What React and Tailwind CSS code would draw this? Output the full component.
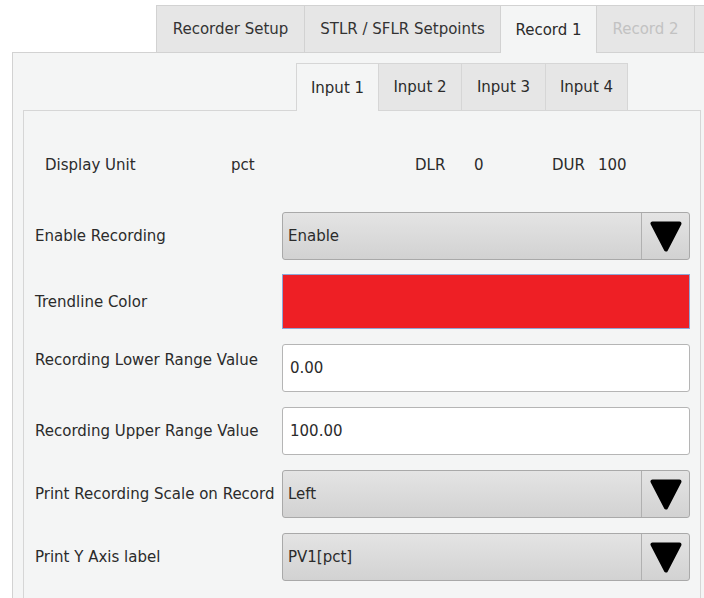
import React from "react";

function Arrow() {
  return (
    <svg width="32" height="31" viewBox="0 0 32 31">
      <path
        d="M2.5 2.5 H29.5 L16 28.5 Z"
        fill="#000"
        stroke="#000"
        strokeWidth="4"
        strokeLinejoin="round"
      />
    </svg>
  );
}

function Dropdown({ value }) {
  return (
    <div className="flex h-[48px] w-[408px] rounded-[3px] border border-[#a9a9a9] bg-gradient-to-b from-[#e4e4e4] to-[#d2d2d2]">
      <div className="flex flex-1 items-center pl-[5px] text-[#2b2b2b]">{value}</div>
      <div className="flex w-[48px] items-center justify-center border-l border-[#b0b0b0]">
        <Arrow />
      </div>
    </div>
  );
}

function TextBox({ value }) {
  return (
    <div className="flex h-[48px] w-[408px] items-center rounded-[3px] border border-[#b5b5b5] bg-white pl-[7px] text-[#2b2b2b]">
      {value}
    </div>
  );
}

function Row({ label, children, labelClass = "", className = "" }) {
  return (
    <div className={"flex items-center " + className}>
      <div className={"w-[258px] shrink-0 whitespace-nowrap pl-[11px] text-[#2b2b2b] " + labelClass}>{label}</div>
      {children}
    </div>
  );
}

export default function App() {
  const outerTabs = [
    { label: "Recorder Setup", w: "w-[148px]", state: "idle" },
    { label: "STLR / SFLR Setpoints", w: "w-[196px]", state: "idle" },
    { label: "Record 1", w: "w-[96px]", state: "active" },
    { label: "Record 2", w: "w-[98px]", state: "disabled" },
  ];
  const innerTabs = [
    { label: "Input 1", w: "w-[82px]", active: true },
    { label: "Input 2", w: "w-[83px]" },
    { label: "Input 3", w: "w-[84px]" },
    { label: "Input 4", w: "w-[83px]" },
  ];

  return (
    <div className="h-[598px] w-[704px] overflow-hidden bg-white font-['DejaVu_Sans',sans-serif] text-[15px] leading-[20px]">
      {/* top level tabs */}
      <div className="flex h-[52px] items-start pl-[156px] pt-[5px]">
        {outerTabs.map((t) => (
          <div
            key={t.label}
            className={
              "relative z-10 flex shrink-0 items-center justify-center whitespace-nowrap border-l border-t border-[#d2d2d2] " +
              t.w +
              (t.state === "active"
                ? " h-[48px] bg-[#f4f5f5] text-[#2b2b2b]"
                : t.state === "disabled"
                ? " h-[47px] bg-[#e6e6e6] text-[#c2c2c2]"
                : " h-[47px] bg-[#e6e6e6] text-[#333333]")
            }
          >
            {t.label}
          </div>
        ))}
        <div className="h-[47px] w-[20px] shrink-0 border-l border-t border-[#d2d2d2] bg-[#e6e6e6]" />
      </div>

      {/* record panel */}
      <div className="ml-[12px] h-[546px] border-l border-t border-[#d2d2d2] bg-[#f4f5f5] pt-[10px]">
        {/* input tabs */}
        <div className="flex h-[47px] items-start pl-[283px]">
          {innerTabs.map((t, i) => (
            <div
              key={t.label}
              className={
                "relative z-10 flex shrink-0 items-center justify-center border-l border-t border-[#d6d6d6] text-[#2b2b2b] " +
                t.w +
                (i === innerTabs.length - 1 ? " border-r" : "") +
                (t.active ? " h-[48px] bg-[#f4f5f5]" : " h-[47px] bg-[#e6e6e6]")
              }
            >
              {t.label}
            </div>
          ))}
        </div>

        {/* input panel */}
        <div className="ml-[10px] h-[500px] w-[678px] border-l border-r border-t border-[#d6d6d6] bg-[#f4f5f5] pt-[44px]">
          <div className="flex h-[20px] items-center pl-[21px] text-[#2b2b2b]">
            <div className="w-[186px]">Display Unit</div>
            <div className="w-[184px]">pct</div>
            <div className="w-[59px]">DLR</div>
            <div className="w-[78px]">0</div>
            <div className="w-[46px]">DUR</div>
            <div>100</div>
          </div>

          <div className="mt-[37px] flex flex-col">
            <Row label="Enable Recording">
              <Dropdown value="Enable" />
            </Row>
            <Row label="Trendline Color" className="mt-[14px]">
              <div className="h-[55px] w-[408px] border border-[#8ea6d6] bg-[#ee1f25]" />
            </Row>
            <Row label="Recording Lower Range Value" labelClass="mb-[16px]" className="mt-[15px]">
              <TextBox value="0.00" />
            </Row>
            <Row label="Recording Upper Range Value" className="mt-[15px]">
              <TextBox value="100.00" />
            </Row>
            <Row label="Print Recording Scale on Record" className="mt-[15px]">
              <Dropdown value="Left" />
            </Row>
            <Row label="Print Y Axis label" className="mt-[15px]">
              <Dropdown value="PV1[pct]" />
            </Row>
          </div>
        </div>
      </div>
    </div>
  );
}
